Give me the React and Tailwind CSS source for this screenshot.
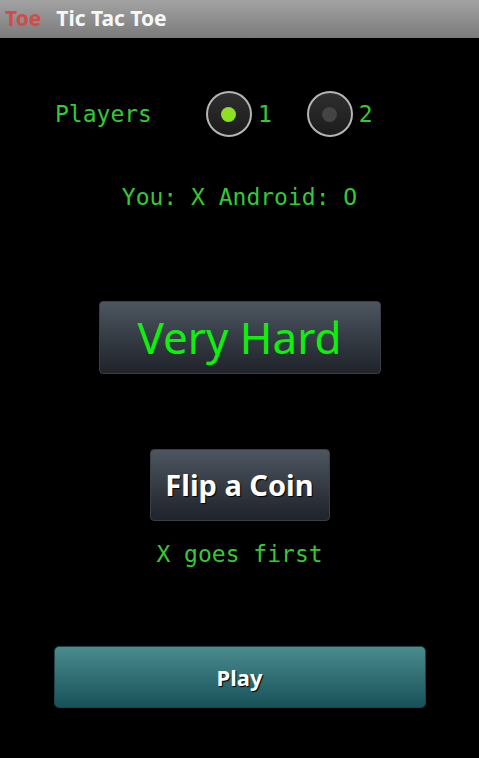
import { useState } from "react";

const mono = "font-['DejaVu_Sans_Mono',monospace]";
const sans = "font-['Noto_Sans','Open_Sans',sans-serif]";

function Radio({ checked, label, onClick }) {
  return (
    <button onClick={onClick} className="flex items-center gap-[6px]">
      <span className="flex h-[46px] w-[46px] items-center justify-center rounded-full border-2 border-[#b5b5b5] bg-gradient-to-b from-[#2e2e2e] to-[#1c1c1c]">
        <span
          className={
            checked
              ? "h-[15px] w-[15px] rounded-full bg-[#8ee022]"
              : "h-[15px] w-[15px] rounded-full bg-[#444444]"
          }
        />
      </span>
      <span className={`${mono} text-[23px] text-[#35c935]`}>{label}</span>
    </button>
  );
}

export default function App() {
  const [players, setPlayers] = useState(1);

  return (
    <div className="h-[758px] w-full bg-black">
      {/* title bar */}
      <div className={`${sans} flex h-[38px] items-center bg-gradient-to-b from-[#a3a3a3] to-[#7b7b7b] px-[5px] text-[21px] font-bold`}>
        <span className="text-[#d24b4b]">Toe</span>
        <span className="ml-[15px] text-[#f7f7f7]">Tic Tac Toe</span>
      </div>

      {/* players */}
      <div className="mt-[53px] flex items-center pl-[55px]">
        <span className={`${mono} text-[23px] text-[#35c935]`}>Players</span>
        <div className="ml-[54px] flex gap-[35px]">
          <Radio checked={players === 1} label="1" onClick={() => setPlayers(1)} />
          <Radio checked={players === 2} label="2" onClick={() => setPlayers(2)} />
        </div>
      </div>

      <p className={`${mono} mt-[43px] text-center text-[23px] text-[#35c935]`}>
        You: X Android: O
      </p>

      <div className="mt-[86px] flex justify-center">
        <button className={`${sans} h-[73px] w-[282px] rounded-[4px] border border-[#3a3f46] bg-gradient-to-b from-[#4d5660] to-[#1f232a] text-[44px] text-[#0ff00f]`}>
          Very Hard
        </button>
      </div>

      <div className="mt-[75px] flex justify-center">
        <button className={`${sans} h-[72px] w-[180px] rounded-[4px] border border-[#3a3f46] bg-gradient-to-b from-[#4d5660] to-[#1f232a] text-[29px] font-bold text-white [text-shadow:1px_1px_1px_#000]`}>
          Flip a Coin
        </button>
      </div>

      <p className={`${mono} mt-[16px] text-center text-[23px] text-[#35c935]`}>
        X goes first
      </p>

      <div className="mt-[75px] flex justify-center">
        <button className={`${sans} h-[62px] w-[372px] rounded-[5px] border border-[#1d4548] bg-gradient-to-b from-[#4a8c8e] to-[#17525a] text-[22px] font-bold text-white [text-shadow:1px_1px_1px_#000]`}>
          Play
        </button>
      </div>
    </div>
  );
}
